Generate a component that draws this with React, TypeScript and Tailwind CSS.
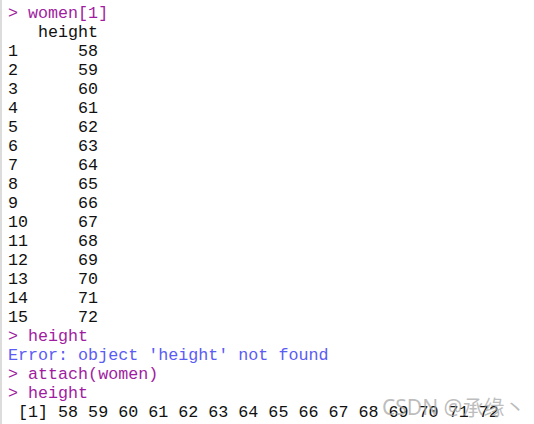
import React from 'react';

const rows = [58, 59, 60, 61, 62, 63, 64, 65, 66, 67, 68, 69, 70, 71, 72];

const Cmd: React.FC<{ text: string }> = ({ text }) => (
  <div className="text-[#a01ca0] whitespace-pre">{'> ' + text}</div>
);

export default function App() {
  return (
    <div className="relative w-[534px] h-[424px] overflow-hidden bg-white">
      <div className="h-full border-l-2 border-[#dcdcdc] pl-[6px] pt-[4px] font-['Liberation_Mono',monospace] text-[16.7px] leading-[19px] text-[#111]">
        <Cmd text="women[1]" />
        <div className="whitespace-pre">{'   height'}</div>
        {rows.map((v, i) => (
          <div key={v} className="whitespace-pre">
            {String(i + 1).padEnd(7, ' ') + v}
          </div>
        ))}
        <Cmd text="height" />
        <div className="text-[#5b5bf5] whitespace-pre">Error: object 'height' not found</div>
        <Cmd text="attach(women)" />
        <Cmd text="height" />
        <div className="whitespace-pre">{' [1] ' + rows.join(' ')}</div>
      </div>
      {/* watermark */}
      <div className="absolute left-[382px] top-[394px] text-[21px] leading-[26px] text-[#a8a8a8]/75 font-['Noto_Sans','Noto_Sans_CJK_SC',sans-serif] whitespace-pre">
        CSDN @承缘丶
      </div>
    </div>
  );
}
